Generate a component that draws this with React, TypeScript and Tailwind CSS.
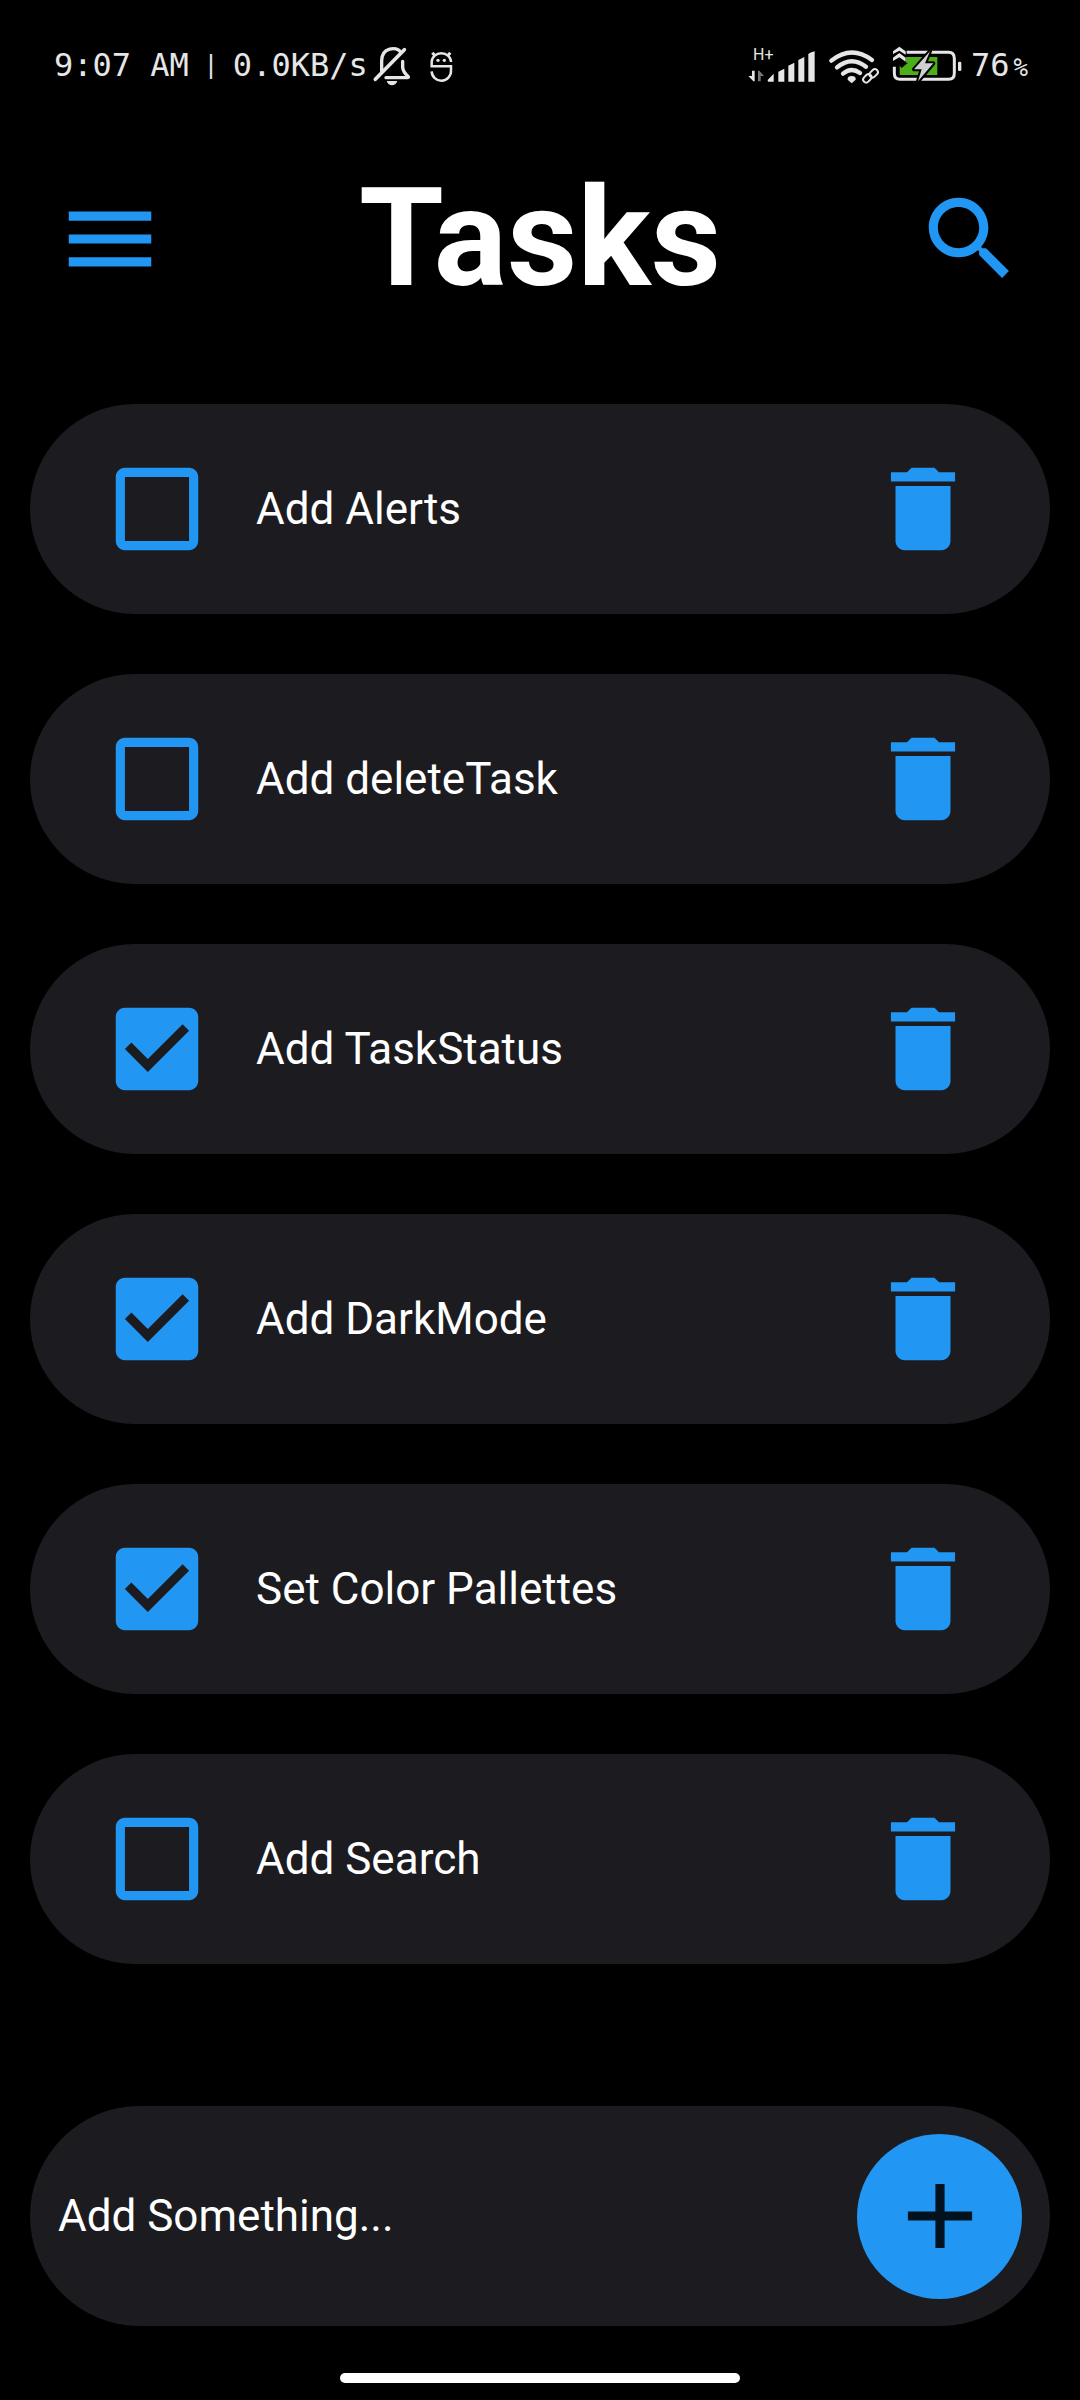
import { useState } from "react";

const INITIAL_TASKS = [
  { id: 1, title: "Add Alerts", done: false },
  { id: 2, title: "Add deleteTask", done: false },
  { id: 3, title: "Add TaskStatus", done: true },
  { id: 4, title: "Add DarkMode", done: true },
  { id: 5, title: "Set Color Pallettes", done: true },
  { id: 6, title: "Add Search", done: false },
];

function Icon({ d }: { d: string }) {
  return (
    <svg viewBox="0 0 24 24" className="size-[110px]" fill="currentColor" fillRule="evenodd" aria-hidden="true">
      <path d={d} />
    </svg>
  );
}

const MENU = "M3 18h18v-2H3v2zm0-5h18v-2H3v2zm0-7v2h18V6H3z";
const SEARCH =
  "M15.5 14h-.79l-.28-.27C15.41 12.59 16 11.11 16 9.5 16 5.91 13.09 3 9.5 3S3 5.91 3 9.5 5.91 16 9.5 16c1.61 0 3.09-.59 4.23-1.57l.27.28v.79l5 4.99L20.49 19l-4.99-5zm-6 0C7.01 14 5 11.99 5 9.5S7.01 5 9.5 5 14 7.01 14 9.5 11.99 14 9.5 14z";
const DELETE = "M6 19c0 1.1.9 2 2 2h8c1.1 0 2-.9 2-2V7H6v12zM19 4h-3.5l-1-1h-5l-1 1H5v2h14V4z";
const BOX = "M19 5v14H5V5h14m0-2H5c-1.1 0-2 .9-2 2v14c0 1.1.9 2 2 2h14c1.1 0 2-.9 2-2V5c0-1.1-.9-2-2-2z";
const BOX_CHECKED =
  "M19 3H5c-1.11 0-2 .9-2 2v14c0 1.1.89 2 2 2h14c1.11 0 2-.9 2-2V5c0-1.1-.89-2-2-2zm-9 14l-5-5 1.41-1.41L10 14.17l7.59-7.59L19 8l-9 9z";
const ADD = "M19 13h-6v6h-2v-6H5v-2h6V5h2v6h6v2z";

function MutedBell() {
  return (
    <svg viewBox="0 0 114 150" className="h-[50px] w-[38px]" fill="none" stroke="currentColor" strokeWidth="10" strokeLinecap="round" strokeLinejoin="round" aria-hidden="true">
      <path d="M29 96V62C29 22 74 18 86 36" />
      <path d="M92 64V82Q93 96 109 110Q110 113 106 113H42" />
      <path d="M10 118L97 29" strokeWidth="11" />
      <path d="M44 123H76Q71 136 60 136Q49 136 44 123Z" fill="currentColor" stroke="none" />
    </svg>
  );
}

function MascotIcon() {
  return (
    <svg viewBox="186 0 72 150" className="h-[50px] w-6" fill="none" stroke="currentColor" strokeWidth="7.5" aria-hidden="true">
      <path d="M249 66A29 26 0 0 0 191 66V79H249V92A29 29 0 0 1 191 94" />
      <path d="M201 47L193 38M239 47L247 38" strokeWidth="9" />
      <circle cx="210" cy="61" r="5" fill="currentColor" stroke="none" />
      <circle cx="229" cy="61" r="5" fill="currentColor" stroke="none" />
    </svg>
  );
}

function SignalIcon() {
  return (
    <svg viewBox="15 0 207 150" className="h-[50px] w-[69px]" fill="currentColor" aria-hidden="true">
      <text x="33" y="61" fontSize="48" fontFamily="Roboto, sans-serif">H+</text>
      <path d="M30 92H38V124H34L19 108H30Z" />
      <path d="M48 124V92H52L66 108H56V124Z" fill="#777" />
      <path d="M77 120L95 101V125H79Q77 125 77 120Z" />
      <path d="M109 95L127 86V125H109Z" />
      <path d="M139 77L157 68V125H139Z" />
      <path d="M169 60L187 51V125H169Z" />
      <path d="M199 43Q201 38 218 34V125H199Z" />
    </svg>
  );
}

function WifiIcon() {
  return (
    <svg viewBox="258 0 156 150" className="h-[50px] w-[52px]" fill="none" stroke="currentColor" aria-hidden="true">
      <g strokeWidth="13" strokeLinecap="round">
        <path d="M268 62Q328 14 390 60" />
        <path d="M285 82Q328 46 372 80" />
        <path d="M303 101Q328 80 354 99" />
      </g>
      <path d="M317 119Q315 109 329 108Q343 109 341 119L329 130Z" fill="currentColor" stroke="none" />
      <g stroke="#000" strokeWidth="15">
        <rect x="362" y="106" width="28" height="18" rx="9" transform="rotate(-45 376 115)" />
        <rect x="381" y="91" width="28" height="18" rx="9" transform="rotate(-45 395 100)" />
      </g>
      <g strokeWidth="6">
        <rect x="362" y="106" width="28" height="18" rx="9" transform="rotate(-45 376 115)" />
        <rect x="381" y="91" width="28" height="18" rx="9" transform="rotate(-45 395 100)" />
      </g>
    </svg>
  );
}

function BatteryIcon() {
  return (
    <svg viewBox="18 0 213 150" className="h-[50px] w-[71px]" fill="none" aria-hidden="true">
      <path d="M62 37H188Q205 37 205 56V100Q205 118 188 118H42Q25 118 25 100V80" stroke="currentColor" strokeWidth="9" />
      <rect x="41" y="51" width="113" height="54" fill="#4caf1a" />
      <path d="M36 50H60V68H66L47 84L36 72Z" fill="#000" />
      <path d="M21 42V34L40 20L59 34V44L40 32Z" fill="currentColor" />
      <path d="M21 63V53L40 39L59 53V65L40 52Z" fill="currentColor" />
      <path d="M132 34L84 88H107L96 124L142 70H117Z" fill="#d0d0d0" stroke="#000" strokeWidth="12" strokeLinejoin="round" paintOrder="stroke" />
      <rect x="216" y="65" width="10" height="28" rx="4" fill="currentColor" />
    </svg>
  );
}

function StatusBar() {
  return (
    <div className="flex h-[130px] items-center justify-between pl-[54px] pr-[52px] font-['DejaVu_Sans_Mono',monospace] text-[32px] leading-none text-[#e6e6e6]">
      <div className="flex items-center">
        <span>9:07 AM</span>
        <span className="w-11 text-center text-2xl leading-none">|</span>
        <span>0.0KB/s</span>
        <span className="ml-1 flex gap-5">
          <MutedBell />
          <MascotIcon />
        </span>
      </div>
      <div className="flex items-center">
        <SignalIcon />
        <span className="ml-3"><WifiIcon /></span>
        <span className="ml-3"><BatteryIcon /></span>
        <span className="ml-2 flex items-baseline gap-1">
          76<span className="text-2xl leading-none">%</span>
        </span>
      </div>
    </div>
  );
}

export default function App() {
  const [tasks, setTasks] = useState(INITIAL_TASKS);
  const [draft, setDraft] = useState("");

  const toggle = (id: number) => setTasks(tasks.map((t) => (t.id === id ? { ...t, done: !t.done } : t)));
  const remove = (id: number) => setTasks(tasks.filter((t) => t.id !== id));
  const add = () => {
    if (!draft.trim()) return;
    setTasks([...tasks, { id: Date.now(), title: draft.trim(), done: false }]);
    setDraft("");
  };

  return (
    <div className="flex min-h-screen flex-col bg-black font-[Roboto,sans-serif] text-[44px] text-white">
      <StatusBar />
      <header className="flex items-center justify-between px-[55px] text-[#2196f3]">
        <button type="button" aria-label="Menu"><Icon d={MENU} /></button>
        <h1 className="pb-0.5 text-[137px] font-bold leading-[216px] text-white">Tasks</h1>
        <button type="button" aria-label="Search"><Icon d={SEARCH} /></button>
      </header>
      <ul className="mt-14 flex flex-col gap-[60px] px-[30px]">
        {tasks.map((t) => (
          <li key={t.id} className="flex h-[210px] items-center rounded-full bg-[#1c1b1f] px-[72px]">
            <label className="relative flex flex-1 items-center gap-11">
              <input type="checkbox" checked={t.done} className="sr-only" onChange={() => toggle(t.id)} />
              <span className="text-[#2196f3]"><Icon d={t.done ? BOX_CHECKED : BOX} /></span>
              <span>{t.title}</span>
            </label>
            <button type="button" aria-label={`Delete ${t.title}`} className="text-[#2196f3]" onClick={() => remove(t.id)}>
              <Icon d={DELETE} />
            </button>
          </li>
        ))}
      </ul>
      <form
        className="mx-[30px] mt-auto flex h-[220px] items-center rounded-full bg-[#1c1b1f] px-7"
        onSubmit={(e) => {
          e.preventDefault();
          add();
        }}
      >
        <input
          type="text"
          aria-label="New task"
          placeholder="Add Something..."
          value={draft}
          onChange={(e) => setDraft(e.target.value)}
          className="min-w-0 flex-1 bg-transparent outline-none placeholder:text-white"
        />
        <button type="submit" aria-label="Add task" className="flex size-[165px] items-center justify-center rounded-full bg-[#2196f3] text-[#03121f]">
          <Icon d={ADD} />
        </button>
      </form>
      <div className="mx-auto mb-[17px] mt-[47px] h-2.5 w-[37%] rounded-full bg-white" />
    </div>
  );
}
